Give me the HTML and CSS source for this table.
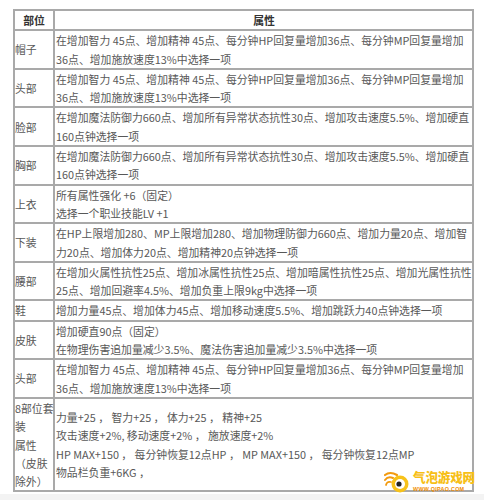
FILE: index.html
```html
<!DOCTYPE html>
<html lang="zh-CN">
<head>
<meta charset="utf-8">
<title>部位属性</title>
<link rel="stylesheet" href="styles.css">
</head>
<body>
<div class="page">
  <table class="attr">
    <thead>
      <tr><th class="pos">部位</th><th class="val head">属性</th></tr>
    </thead>
    <tbody>
      <tr><td class="pos">帽子</td><td class="val">在增加智力 45点、增加精神 45点、每分钟HP回复量增加36点、每分钟MP回复量增加<br>36点、增加施放速度13%中选择一项</td></tr>
      <tr><td class="pos">头部</td><td class="val">在增加智力 45点、增加精神 45点、每分钟HP回复量增加36点、每分钟MP回复量增加<br>36点、增加施放速度13%中选择一项</td></tr>
      <tr><td class="pos">脸部</td><td class="val">在增加魔法防御力660点、增加所有异常状态抗性30点、增加攻击速度5.5%、增加硬直<br>160点钟选择一项</td></tr>
      <tr><td class="pos">胸部</td><td class="val">在增加魔法防御力660点、增加所有异常状态抗性30点、增加攻击速度5.5%、增加硬直<br>160点钟选择一项</td></tr>
      <tr><td class="pos">上衣</td><td class="val">所有属性强化 +6（固定）<br>选择一个职业技能LV +1</td></tr>
      <tr><td class="pos">下装</td><td class="val">在HP上限增加280、MP上限增加280、增加物理防御力660点、增加力量20点、增加智<br>力20点、增加体力20点、增加精神20点钟选择一项</td></tr>
      <tr><td class="pos">腰部</td><td class="val">在增加火属性抗性25点、增加冰属性抗性25点、增加暗属性抗性25点、增加光属性抗性<br>25点、增加回避率4.5%、增加负重上限9kg中选择一项</td></tr>
      <tr><td class="pos">鞋</td><td class="val">增加力量45点、增加体力45点、增加移动速度5.5%、增加跳跃力40点钟选择一项</td></tr>
      <tr><td class="pos">皮肤</td><td class="val">增加硬直90点（固定）<br>在物理伤害追加量减少3.5%、魔法伤害追加量减少3.5%中选择一项</td></tr>
      <tr><td class="pos">头部</td><td class="val">在增加智力 45点、增加精神 45点、每分钟HP回复量增加36点、每分钟MP回复量增加<br>36点、增加施放速度13%中选择一项</td></tr>
      <tr><td class="pos">8部位套<br>装<br>属性<br>（皮肤<br>除外）</td><td class="val">力量+25 ， 智力+25 ， 体力+25 ， 精神+25<br>攻击速度+2%, 移动速度+2% ， 施放速度+2%<br>HP MAX+150 ， 每分钟恢复12点HP ， MP MAX+150 ， 每分钟恢复12点MP<br>物品栏负重+6KG ，</td></tr>
    </tbody>
  </table>
  <div class="logo">
    <svg class="logo-icon" width="28" height="24" viewBox="0 0 28 24">
      <path d="M1 5 Q6 1 13 5" fill="none" stroke="#f29a0e" stroke-width="2.2" stroke-linecap="round"/>
      <path d="M1 10 Q4 6 9 8" fill="none" stroke="#f29a0e" stroke-width="2" stroke-linecap="round"/>
      <path d="M2 15 Q3 11 7 12" fill="none" stroke="#f29a0e" stroke-width="1.8" stroke-linecap="round"/>
      <circle cx="16" cy="14" r="8.5" fill="#f7c21a"/>
      <circle cx="16" cy="14" r="5" fill="#ffffff"/>
      <circle cx="15" cy="14" r="2.6" fill="#222222"/>
    </svg>
    <div class="logo-text">
      <span class="logo-name">气泡游戏网</span>
      <span class="logo-url">WWW.QIPAO.COM</span>
    </div>
  </div>
  <div class="strip"></div>
</div>
</body>
</html>
```
FILE: styles.css
```css
html, body {
  margin: 0;
  padding: 0;
  background: #ffffff;
}
body {
  font-family: "Noto Sans CJK SC", "Microsoft YaHei", sans-serif;
  font-size: 10.85px;
  color: #585858;
  overflow: hidden;
}
.page {
  position: relative;
  padding: 9px 0 0 13px;
  height: 491px;
}
.attr {
  width: 461px;
  table-layout: fixed;
  border-collapse: separate;
  border-spacing: 0;
  border: 1px solid #a9a9a9;
}
.attr th,
.attr td {
  border: 1px solid #a9a9a9;
  line-height: 18.3px;
  padding: 0;
  vertical-align: middle;
  white-space: nowrap;
  text-align: left;
}
.attr th {
  font-weight: bold;
  color: #333333;
  text-align: center;
}
.attr .pos {
  width: 38px;
}
.attr .val {
  padding-left: 1px;
}
.attr th.head {
  text-align: center;
}
.logo {
  position: absolute;
  left: 384px;
  top: 469px;
  display: flex;
  align-items: flex-start;
  gap: 1px;
}
.logo-icon {
  display: block;
  margin-top: 1px;
}
.logo-text {
  display: flex;
  flex-direction: column;
  align-items: flex-start;
  padding-top: 1px;
}
.logo-name {
  font-family: "Noto Sans CJK SC", sans-serif;
  font-weight: 900;
  font-size: 12.6px;
  line-height: 13px;
  color: #f7bf17;
  letter-spacing: -0.2px;
}
.logo-url {
  margin-top: 3px;
  font-family: "Liberation Sans", sans-serif;
  font-weight: bold;
  font-size: 5.4px;
  line-height: 6px;
  color: #f08c00;
  letter-spacing: 0.3px;
}
.strip {
  margin-top: 2px;
  margin-left: -13px;
  height: 10px;
  background: #f3f3f3;
}
```
